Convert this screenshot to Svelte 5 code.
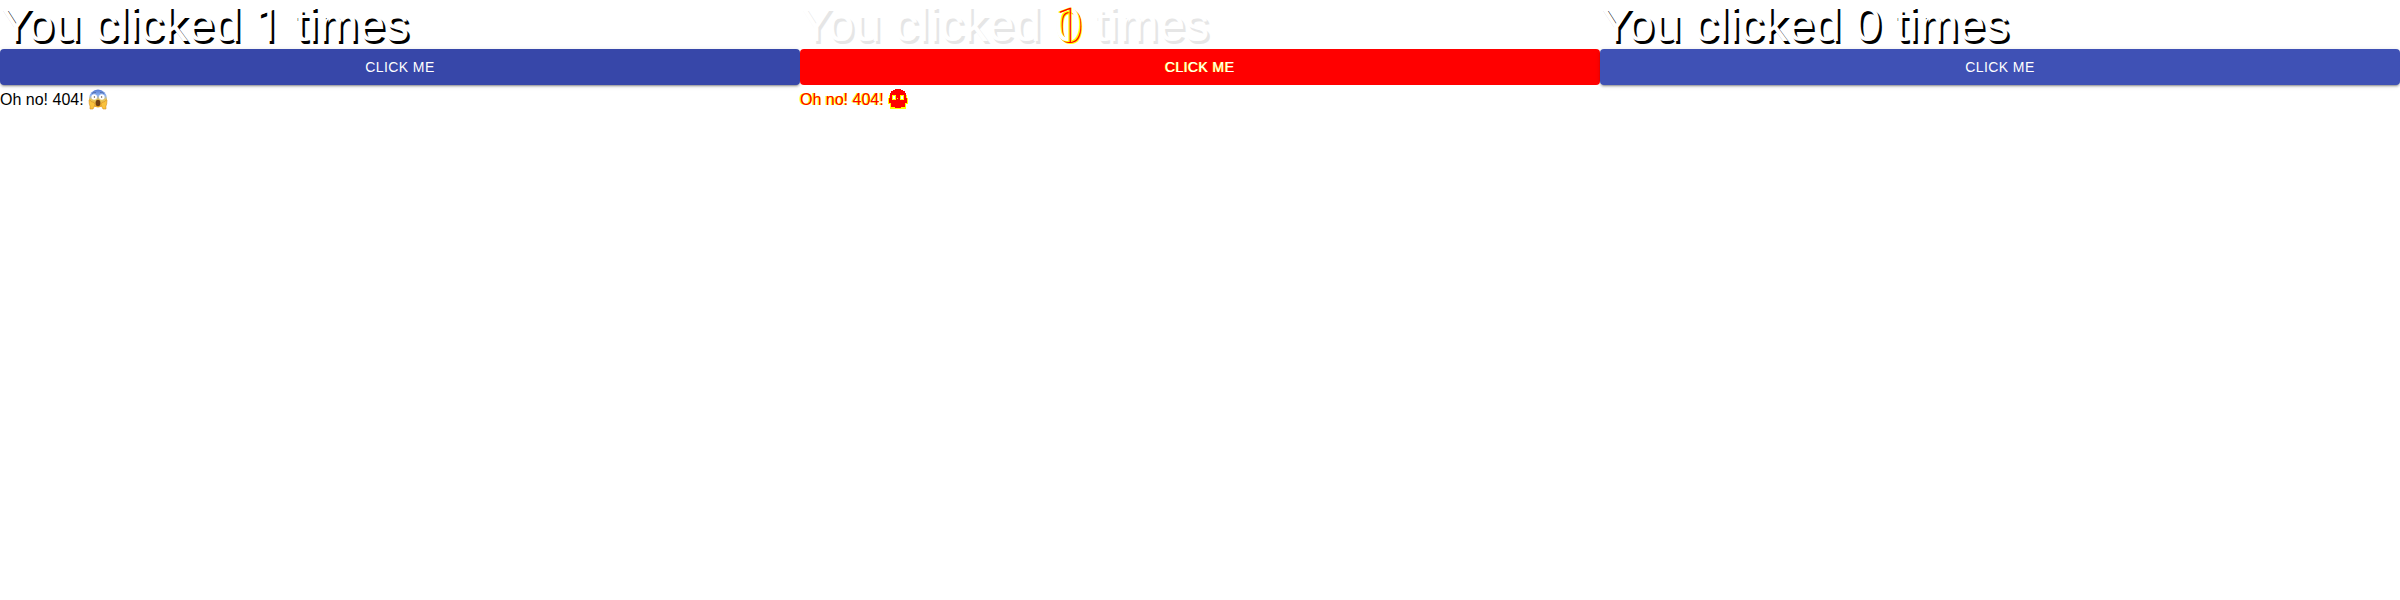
<script>
  const panels = [
    { kind: 'before', count: '1', message: true },
    { kind: 'diff', count: '0', message: true },
    { kind: 'after', count: '0', message: false }
  ];
</script>

<main>
  {#each panels as panel}
    <section class={panel.kind}>
      <h1>You clicked <span class="count" class:one={panel.count === '1'}>{panel.count}{#if panel.kind === 'diff'}<span class="old one">1</span>{/if}</span> times</h1>
      <button><span>Click me</span></button>
      {#if panel.message}
        <p>
          <span class="message">Oh no! 404!</span>
          {#if panel.kind === 'diff'}
            <svg width="20" height="21" viewBox="0 0 20 21" shape-rendering="crispEdges">
              <path fill="#ff0" d="M1 6H3V10H1zM0 9H2V15H0zM17 6H19V10H17zM18 9H20V15H18zM2 15H18V20H2z" />
              <path fill="#f00" d="M7 0H13V1H15V2H17V4H18V9H19V14H17V18H13V19H7V18H3V14H1V9H2V4H3V2H5V1H7z" />
              <path fill="#ff0" d="M4 6H8V11H4zM12 6H16V11H12zM9 9H10V10H9zM2 14H3V19H2zM17 14H18V19H17z" />
              <path fill="#fff" d="M5 7H7V10H5zM13 7H15V10H13z" />
            </svg>
          {:else}
            <svg width="20" height="21" viewBox="0 0 20 21">
              <defs>
                <linearGradient id="face" x2="0" y2="1">
                  <stop stop-color="#557bd4" />
                  <stop offset=".34" stop-color="#8fb3f0" />
                  <stop offset=".57" stop-color="#e9c75b" />
                  <stop offset="1" stop-color="#eea51c" />
                </linearGradient>
              </defs>
              <circle cx="10" cy="9.5" r="9" fill="url(#face)" />
              <path d="M4 4.6Q6 2.6 8 3.5M12 3.5Q14 2.6 16 4.6" fill="none" stroke="#47619b" stroke-width=".7" />
              <circle cx="6.2" cy="8" r="2.8" fill="#fff" />
              <circle cx="13.8" cy="8" r="2.8" fill="#fff" />
              <circle cx="6.4" cy="8" r=".7" fill="#594b3b" />
              <circle cx="13.6" cy="8" r=".7" fill="#594b3b" />
              <ellipse cx="10" cy="14" rx="2.4" ry="3.2" fill="#714013" />
              <path d="M1 11Q2 9.5 3 12.5L6 13.5Q8 15.5 6 18L5 20H2Q2.5 17 1.3 15zM19 11Q18 9.5 17 12.5L14 13.5Q12 15.5 14 18L15 20H18Q17.5 17 18.7 15z" fill="#f9c23c" stroke="#d69027" stroke-width=".6" />
            </svg>
          {/if}
        </p>
      {/if}
    </section>
  {/each}
</main>

<style>
  :global(body) { background: #fff; }
  main {
    display: grid;
    grid-template-columns: repeat(3, 800px);
    height: 600px;
    font-family: "Liberation Sans", Arial, sans-serif;
  }
  section { min-width: 0; }
  h1 {
    margin: 0;
    height: 49px;
    font-size: 48px;
    line-height: 50px;
    font-weight: 400;
    color: #fff;
    text-shadow: 2.5px 2.5px 0 #000;
    white-space: nowrap;
  }
  .count {
    position: relative;
    display: inline-block;
    width: 26.7px;
    height: 49px;
    vertical-align: top;
  }
  .one { font-family: Roboto, "Liberation Sans", sans-serif; }
  button {
    display: flex;
    align-items: center;
    justify-content: center;
    width: 100%;
    height: 36px;
    margin: 0;
    padding: 0 16px;
    border: 0;
    border-radius: 4px;
    background: #3f51b5;
    color: #fff;
    font: 400 14px/24px "Liberation Sans", Arial, sans-serif;
    letter-spacing: .4px;
    text-transform: uppercase;
    box-shadow: 0 3px 1px -2px rgba(0,0,0,.2), 0 2px 2px rgba(0,0,0,.14), 0 1px 5px rgba(0,0,0,.12);
  }
  .before button { background: #3747a9; }
  p {
    display: flex;
    align-items: center;
    gap: 4px;
    height: 24px;
    margin: 2px 0 0;
    font-size: 16px;
    line-height: 24px;
  }
  .message { padding-top: 2px; }
  .diff h1 { text-shadow: 2.5px 2.5px 0 #e6e6e6; }
  .diff .count { text-shadow: 1px 1px 0 #ff0, 2px 2px 0 #f00, 3px 3px 0 #ff0; }
  .diff .old {
    position: absolute;
    left: 1px;
    top: 1px;
    color: #f00;
    font-weight: 100;
    text-shadow: 1px 0 0 #ff0, -1px 0 0 #ff0;
  }
  .diff button { background: #f00; box-shadow: none; }
  .diff button span { text-shadow: -1px 0 0 #ff0; }
  .diff .message { color: #f00; text-shadow: -1px 0 0 #ff0, .5px 0 0 #ff0; }
</style>
